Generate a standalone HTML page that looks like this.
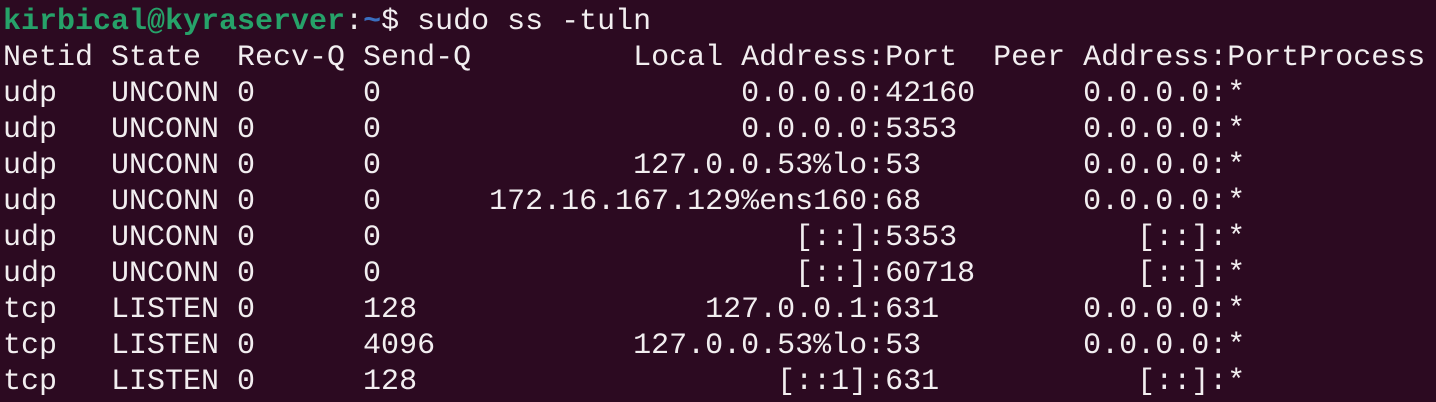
<!DOCTYPE html>
<html><head><meta charset="utf-8"><style>
html,body{margin:0;padding:0;background:#2c0a21;width:1436px;height:402px;overflow:hidden}
pre{margin:0;padding:4px 0 0 3px;font-family:"Liberation Mono","DejaVu Sans Mono",monospace;font-size:30px;line-height:36px;color:#f2eef0;white-space:pre}
.g{color:#26a269;font-weight:bold}.b{color:#3a6fc0;font-weight:bold}
</style></head><body><pre><span class="g">kirbical@kyraserver</span>:<span class="b">~</span>$ sudo ss -tuln
Netid State  Recv-Q Send-Q         Local Address:Port  Peer Address:PortProcess
udp   UNCONN 0      0                    0.0.0.0:42160      0.0.0.0:*
udp   UNCONN 0      0                    0.0.0.0:5353       0.0.0.0:*
udp   UNCONN 0      0              127.0.0.53%lo:53         0.0.0.0:*
udp   UNCONN 0      0      172.16.167.129%ens160:68         0.0.0.0:*
udp   UNCONN 0      0                       [::]:5353          [::]:*
udp   UNCONN 0      0                       [::]:60718         [::]:*
tcp   LISTEN 0      128                127.0.0.1:631        0.0.0.0:*
tcp   LISTEN 0      4096           127.0.0.53%lo:53         0.0.0.0:*
tcp   LISTEN 0      128                    [::1]:631           [::]:*</pre></body></html>
